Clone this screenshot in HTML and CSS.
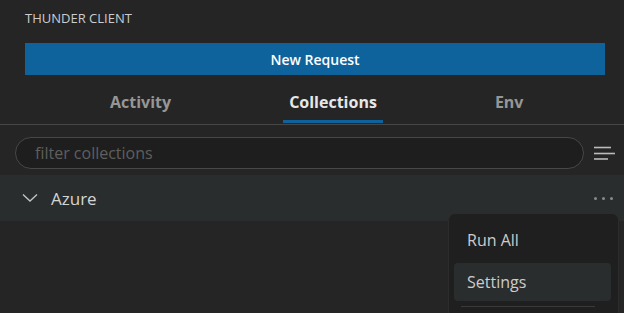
FILE: index.html
```html
<!DOCTYPE html>
<html lang="en">
<head>
    <meta charset="UTF-8">
    <title>Thunder Client</title>
    <link rel="stylesheet" href="styles.css">
</head>
<body>
    <div class="panel-title">THUNDER CLIENT</div>
    <div class="btn-wrap">
        <button class="new-request">New Request</button>
    </div>
    <div class="tabs">
        <div class="tab">Activity</div>
        <div class="tab active">Collections</div>
        <div class="tab">Env</div>
    </div>
    <div class="search-row">
        <input class="filter-input" type="text" placeholder="filter collections">
        <svg class="sort-icon" width="22" height="16" viewBox="0 0 22 16">
            <line x1="0" y1="2.5" x2="17" y2="2.5" />
            <line x1="0" y1="8.5" x2="21" y2="8.5" />
            <line x1="0" y1="14" x2="14" y2="14" />
        </svg>
    </div>
    <div class="collection-row">
        <svg class="chevron" width="16" height="10" viewBox="0 0 16 10">
            <polyline points="1,1.5 8,8 15,1.5" />
        </svg>
        <span class="collection-name">Azure</span>
        <span class="more-dots"><i></i><i></i><i></i></span>
    </div>

    <div class="context-menu">
        <div class="menu-item">Run All</div>
        <div class="menu-item hover">Settings</div>
        <div class="menu-sep"></div>
    </div>
</body>
</html>
```

FILE: styles.css
```css
body {
    margin: 0;
    background-color: #252526;
    color: #cccccc;
    font-family: 'Open Sans', 'Noto Sans', sans-serif;
    width: 624px;
    height: 313px;
    overflow: hidden;
    position: relative;
}
.panel-title {
    padding: 9px 25px 0 25px;
    height: 25px;
    font-size: 13px;
    line-height: 18px;
    color: #cccccc;
}
.btn-wrap {
    padding: 9px 19px 0 25px;
}
.new-request {
    display: block;
    width: 100%;
    height: 32px;
    background-color: #0e639c;
    border: none;
    color: #ffffff;
    font-family: inherit;
    font-size: 14px;
    font-weight: 600;
    cursor: pointer;
}
.tabs {
    display: flex;
    gap: 106px;
    padding: 10px 0 0 104px;
    box-sizing: border-box;
    border-bottom: 1px solid #474747;
    height: 50px;
}
.tab {
    padding: 0 6px;
    font-size: 16px;
    font-weight: 700;
    line-height: 35px;
    color: #969696;
    border-bottom: 3px solid transparent;
    height: 38px;
    box-sizing: border-box;
}
.tab.active {
    color: #e7e7e7;
    border-bottom-color: #0e639c;
}
.search-row {
    display: flex;
    align-items: center;
    padding: 12px 8px 6px 15px;
}
.filter-input {
    width: 570px;
    height: 32px;
    box-sizing: border-box;
    border: 1px solid #474747;
    border-radius: 16px;
    background-color: #1e1e1e;
    padding: 0 19px;
    font-family: inherit;
    font-size: 16px;
    color: #cccccc;
    outline: none;
}
.filter-input::placeholder {
    color: #5f5f5f;
}
.sort-icon {
    margin-left: 10px;
    stroke: #bbbbbb;
    stroke-width: 1.6;
}
.collection-row {
    display: flex;
    align-items: center;
    height: 46px;
    background-color: #2a2d2e;
    padding: 0 11px 0 22px;
}
.chevron {
    fill: none;
    stroke: #c5c5c5;
    stroke-width: 1.3;
    margin-right: 13px;
}
.collection-name {
    font-size: 17px;
    color: #d4d4d4;
    flex: 1;
}
.more-dots {
    display: flex;
    gap: 5px;
}
.more-dots i {
    width: 3px;
    height: 3px;
    border-radius: 50%;
    background-color: #8a8a8a;
}
/* Kontextmenü über der Liste */
.context-menu {
    position: absolute;
    left: 448px;
    top: 213px;
    width: 171px;
    height: 100px;
    box-sizing: border-box;
    background-color: #1f1f1f;
    border: 1px solid #2c2c2c;
    border-bottom: none;
    border-radius: 7px 7px 0 0;
    padding: 7px 7px 0 5px;
}
.menu-item {
    height: 38px;
    line-height: 38px;
    padding: 0 13px;
    font-size: 16px;
    color: #cccccc;
    border-radius: 4px;
    margin-bottom: 5px;
}
.menu-item.hover {
    background-color: #2a2d2e;
    margin-top: -1px;
}
.menu-sep {
    height: 1px;
    margin: 0 16px 0 7px;
    background-color: #3a3a3a;
}
```
